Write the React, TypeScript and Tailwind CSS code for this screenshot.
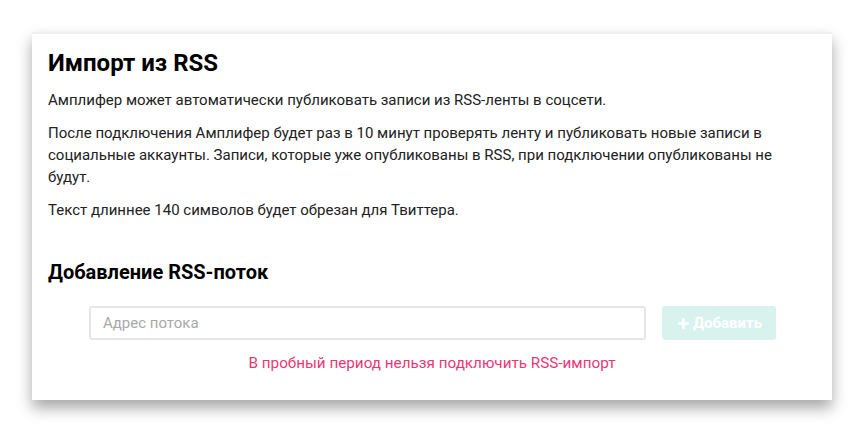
import { Plus } from "lucide-react";

export default function App() {
  return (
    <div className="w-[864px] h-[432px] bg-white pt-8 px-8 font-['Roboto',sans-serif]">
      <div className="w-[800px] h-[368px] bg-white border-t-2 border-[#efefef] shadow-[0_8px_14px_rgba(0,0,0,0.35)] px-4 pt-3">
        <h1 className="text-[24px] font-bold text-black leading-[34px]">
          Импорт из RSS
        </h1>
        <div className="mt-[9px] text-[15px] leading-[22px] text-[#222] flex flex-col gap-[11px]">
          <p>Амплифер может автоматически публиковать записи из RSS-ленты в соцсети.</p>
          <p className="w-[760px]">
            После подключения Амплифер будет раз в 10 минут проверять ленту и публиковать новые записи в
            социальные аккаунты. Записи, которые уже опубликованы в RSS, при подключении опубликованы не
            будут.
          </p>
          <p>Текст длиннее 140 символов будет обрезан для Твиттера.</p>
        </div>

        <h2 className="mt-[37px] text-[20px] font-bold text-black leading-[28px]">
          Добавление RSS-поток
        </h2>

        <div className="mt-[20px] flex items-center pl-[41px] gap-[16px]">
          <input
            placeholder="Адрес потока"
            className="w-[557px] h-[34px] border-2 border-[#e6e6e6] rounded-[3px] px-3 text-[15px] placeholder:text-[#a8a8a8] outline-none"
          />
          <button
            type="button"
            className="w-[114px] h-[34px] rounded-[3px] bg-[#d8f3ee] text-white font-bold text-[15px] flex items-center justify-center gap-[2px]"
          >
            <Plus size={15} strokeWidth={4} />
            Добавить
          </button>
        </div>

        <p className="mt-[12px] text-center text-[15.25px] text-[#ea3776]">
          В пробный период нельзя подключить RSS-импорт
        </p>
      </div>
    </div>
  );
}
